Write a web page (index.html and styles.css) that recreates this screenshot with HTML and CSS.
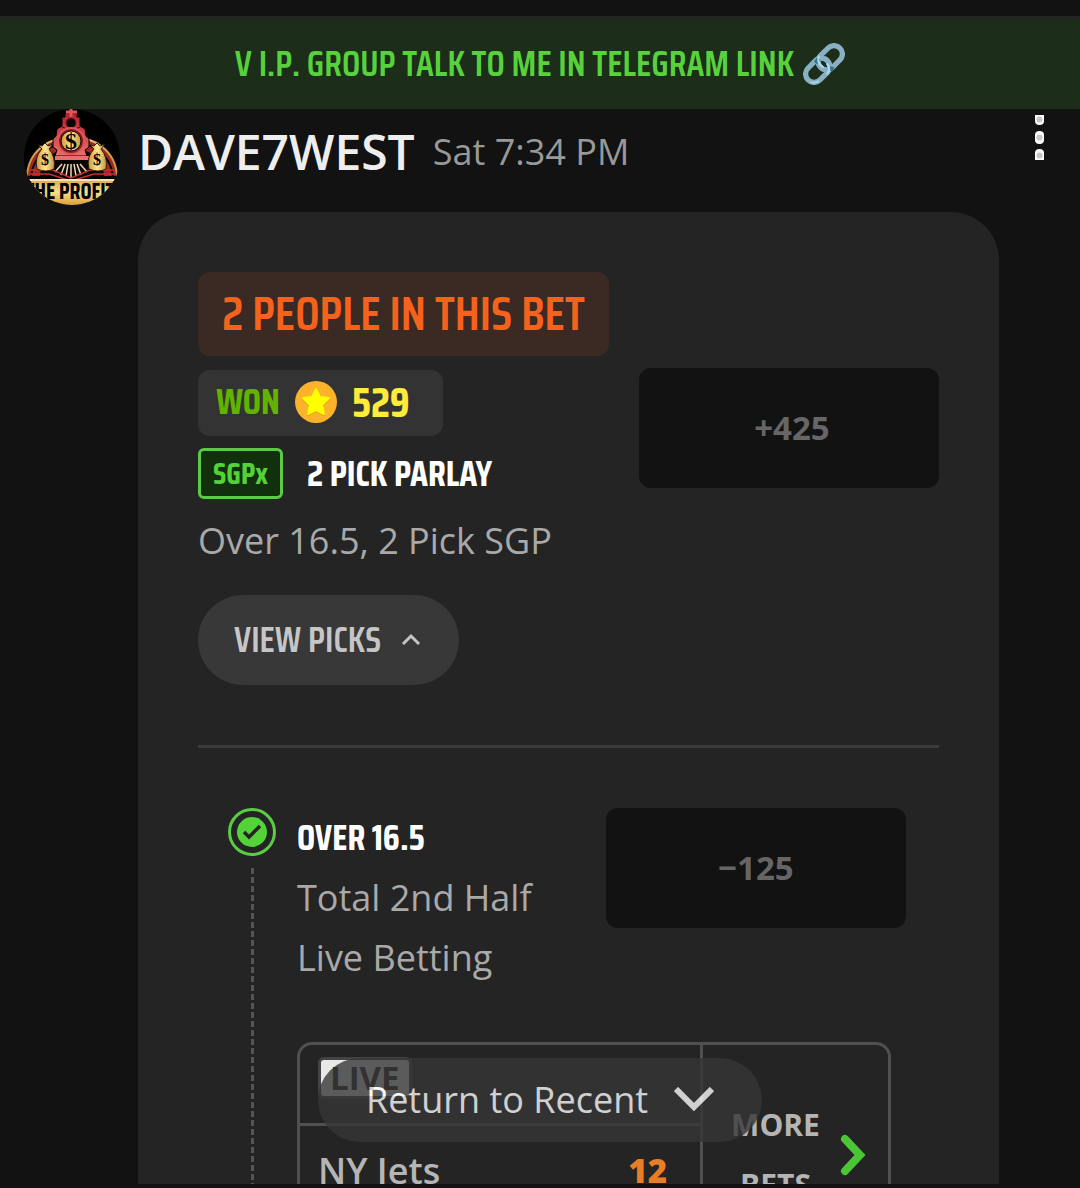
FILE: index.html
```html
<!DOCTYPE html>
<html lang="en">
<head>
<meta charset="utf-8">
<meta name="viewport" content="width=device-width, initial-scale=1">
<title>Group chat</title>
<link rel="stylesheet" href="styles.css">
</head>
<body>
<a class="banner" href="#telegram">
  <span>V I.P. GROUP TALK TO ME IN TELEGRAM LINK</span>
  <svg class="banner-icon" viewBox="0 0 40 40" aria-hidden="true">
    <g fill="none" stroke="#88afc2" stroke-width="5">
      <rect x="-13" y="-8" width="26" height="16" rx="8" transform="translate(26 14) rotate(-45)"/>
      <rect x="-13" y="-8" width="26" height="16" rx="8" transform="translate(14 26) rotate(-45)"/>
    </g>
    <path d="M12 19l3-4M25 24l4 1" fill="none" stroke="#2f7488" stroke-width="4"/>
    <path d="M15 13Q13 19 19 23M23 20Q27 25 23 29" fill="none" stroke="#a9dcec" stroke-width="2" stroke-linecap="round"/>
    <path d="M7 37q4 2 8-1" fill="none" stroke="#a3d3e5" stroke-width="2"/>
  </svg>
</a>

<main class="feed">
  <article class="message">
    <svg class="avatar" viewBox="0 0 96 96" role="img" aria-label="DAVE7WEST">
      <defs>
        <clipPath id="round"><circle cx="48" cy="48" r="48"/></clipPath>
        <linearGradient id="gold" x2="1"><stop offset="0" stop-color="#c8953c"/><stop offset=".5" stop-color="#fbe793"/><stop offset="1" stop-color="#c8953c"/></linearGradient>
        <linearGradient id="plate" x2="0" y2="1"><stop offset="0" stop-color="#d9a548"/><stop offset=".5" stop-color="#f8df8c"/><stop offset="1" stop-color="#d9a03a"/></linearGradient>
        <linearGradient id="red" x2="0" y2="1"><stop offset="0" stop-color="#b51f2a"/><stop offset="1" stop-color="#e8706c"/></linearGradient>
      </defs>
      <g clip-path="url(#round)">
        <path d="M0 0h96v96H0z" fill="#000"/>
        <path d="M3 67C6 15 90 15 93 67" fill="#a12626" stroke="url(#gold)" stroke-width="2"/>
        <path d="M7 67C12 22 84 22 89 67" fill="none" stroke="#000" stroke-width="2"/>
        <path d="M16 67C18 30 78 30 80 67z" fill="#0b0506"/>
        <path d="M41 4h12v4h3v9l5 3 1 7 3 3v8l-4 3 2 6H31l2-6-4-3v-8l3-3 1-7 5-3V8h3z" fill="url(#red)" stroke="#000" stroke-width="1"/>
        <path d="M42 3h11M47 0v8" stroke="#e0565a" stroke-width="3"/>
        <path d="M38 18q9 5 18 0" fill="none" stroke="#360c0f" stroke-width="1"/>
        <circle cx="47" cy="14" r="5" fill="#090506" stroke="#7d171b" stroke-width="1"/>
        <circle cx="47" cy="32" r="13" fill="#8c1c22" stroke="#e0565a" stroke-width="2"/>
        <circle cx="47" cy="32" r="10" fill="url(#gold)" stroke="#1b0a0a" stroke-width="1"/>
        <text x="47" y="40" text-anchor="middle" class="avatar-dollar">$</text>
        <path d="M31 47h34v4H31z" fill="#e8706c"/>
        <path d="M36 52h23v2H36z" fill="#000"/>
        <path d="M38 55l-7 8M41 55l-4 11M44 55l-2 12M47 55v13M50 55l2 12M53 55l4 11M56 55l7 8" stroke="#ead7b3" stroke-width="1.500"/>
        <path d="M5 61h24l18 8 19-8h24M5 65h20l22 7 23-7h21" fill="none" stroke="#c92f35" stroke-width="1.500"/>
        <g fill="url(#gold)" stroke="#30200e" stroke-width="1">
          <path d="M18 40l-4-4 4 1 3-3 3 3 5-2-4 5q7 8 5 20-8 4-17 0-3-12 5-20z"/>
          <path d="M70 40l-4-4 4 1 3-3 3 3 5-2-4 5q7 8 5 20-8 4-17 0-3-12 5-20z"/>
        </g>
        <text x="21" y="56" text-anchor="middle" class="avatar-coin">$</text>
        <text x="73" y="56" text-anchor="middle" class="avatar-coin">$</text>
        <path d="M0 70h96v26H0z" fill="url(#plate)"/>
        <path d="M0 70h96v2H0z" fill="#f8e4b3"/>
        <text x="46" y="90" text-anchor="middle" class="avatar-name">THE PROFIT</text>
      </g>
    </svg>

    <div class="body">
      <header class="byline">
        <h1 class="author">DAVE7WEST</h1>
        <time class="time">Sat 7:34 PM</time>
        <button class="menu" type="button" aria-label="Message options">
          <svg viewBox="0 0 10 46" aria-hidden="true">
            <path d="M0 0h9v6q0 4-4.500 4T0 6zM0 20q0-4 4.500-4T9 20v5q0 4-4.500 4T0 25zM0 38q0-4 4.500-4T9 38v7H0z" fill="#fff"/>
            <g fill="#c6c6c6"><circle cx="4.500" cy="4.500" r="3"/><circle cx="4.500" cy="22.500" r="3"/><circle cx="4.500" cy="40.500" r="3"/></g>
          </svg>
        </button>
      </header>

      <section class="card">
        <p class="people">2 PEOPLE IN THIS BET</p>
        <div class="summary">
          <div class="details">
            <div class="won">
              <span class="won-label">WON</span>
              <svg class="coin" viewBox="0 0 42 42" aria-hidden="true">
                <circle cx="21" cy="21" r="21" fill="#fdb22b"/>
                <path d="M21 9l4 8 9 1-7 7 2 9-8-4-8 4 2-9-7-7 9-1z" fill="#d9a514" stroke="#d9a514" stroke-width="2" stroke-linejoin="round"/>
                <path d="M21 8l4 8 9 1-7 7 2 9-8-4-8 4 2-9-7-7 9-1z" fill="#ff0" stroke="#ff0" stroke-width="2" stroke-linejoin="round"/>
              </svg>
              <span class="won-value">529</span>
            </div>
            <div class="parlay">
              <span class="tag">SGPx</span>
              <h2 class="title">2 PICK PARLAY</h2>
            </div>
            <p class="text">Over 16.5, 2 Pick SGP</p>
          </div>
          <button class="odds" type="button" disabled>+425</button>
        </div>
        <button class="toggle" type="button" aria-expanded="true">
          <span>VIEW PICKS</span>
          <svg class="toggle-icon" viewBox="0 0 20 14" aria-hidden="true"><path d="M2 11l8-8 8 8" fill="none" stroke="#c6c6c6" stroke-width="3"/></svg>
        </button>
        <hr class="rule">

        <div class="leg">
          <div class="track">
            <svg class="check" viewBox="0 0 48 48" role="img" aria-label="Won">
              <circle cx="24" cy="24" r="22.500" fill="none" stroke="#5bcb46" stroke-width="3"/>
              <circle cx="24" cy="24" r="15" fill="#53d337"/>
              <path d="M16 24l5 5 11-11" fill="none" stroke="#242424" stroke-width="3.500"/>
            </svg>
            <div class="dashes"></div>
          </div>
          <div class="pick">
            <div class="pick-head">
              <div>
                <h3 class="title">OVER 16.5</h3>
                <p class="text">Total 2nd Half</p>
                <p class="text">Live Betting</p>
              </div>
              <button class="odds" type="button" disabled>−125</button>
            </div>
            <div class="game">
              <div class="score">
                <div class="status"><span class="live">LIVE</span></div>
                <div class="team"><span>NY Jets</span><strong class="points">12</strong></div>
              </div>
              <a class="more" href="#bets">
                <span class="more-label">MORE BETS</span>
                <svg class="more-icon" viewBox="0 0 26 42" aria-hidden="true"><path d="M5 5l15 16L5 37" fill="none" stroke="#4bc435" stroke-width="8" stroke-linecap="round"/></svg>
              </a>
            </div>
          </div>
        </div>
      </section>
    </div>
  </article>
</main>

<button class="recent" type="button">
  <span>Return to Recent</span>
  <svg class="recent-icon" viewBox="0 0 40 26" aria-hidden="true"><path d="M2 2l18 18L38 2" fill="none" stroke="#fff" stroke-width="6"/></svg>
</button>
</body>
</html>
```
FILE: styles.css
```css
* { box-sizing: border-box; }

:root {
  --display: "Saira Condensed", "Roboto Condensed", sans-serif;
}

body {
  display: flex;
  flex-direction: column;
  height: 100vh;
  margin: 0;
  padding: 16px 0 4px;
  position: relative;
  background: #121212;
  color: #a9a9a9;
  font: 36px/60px "Open Sans", sans-serif;
  overflow: hidden;
}

h1, h2, h3, p { margin: 0; }
button { border: 0; padding: 0; font: inherit; }
svg { display: block; flex: none; }

.banner {
  display: flex;
  flex: none;
  align-items: center;
  justify-content: center;
  gap: 9px;
  height: 93px;
  border-top: 3px solid #242424;
  background: #1c2d19;
  color: #57d13c;
  font: 600 36px/60px var(--display);
  text-decoration: none;
}
.banner-icon { width: 42px; height: 42px; }

.feed { flex: 1; min-height: 0; overflow: hidden; }
.message { display: flex; gap: 18px; padding: 0 24px; }
.avatar { width: 96px; height: 96px; }
.avatar-dollar { font: bold 24px "Liberation Serif", serif; }
.avatar-coin { font: bold 16px "Liberation Serif", serif; }
.avatar-name { font: bold 22px var(--display); }

.body { flex: 1; min-width: 0; }
.byline { display: flex; align-items: center; gap: 18px; height: 103px; padding-bottom: 18px; }
.author { color: #eee; font-size: 48px; font-weight: 600; }
.time { color: #999; }
.menu { align-self: flex-start; margin: 6px 11px 0 auto; background: none; }
.menu svg { width: 10px; height: 46px; }

.card {
  margin-right: 57px;
  padding: 60px 60px 0;
  border-radius: 48px 48px 0 0;
  background: #242424;
}
.people {
  width: fit-content;
  margin-bottom: 12px;
  padding: 12px 24px;
  border-radius: 12px;
  background: #3a2a23;
  color: #f5621d;
  font: 600 48px/60px var(--display);
}
.summary, .pick-head { display: flex; justify-content: space-between; align-items: flex-start; }
.details { padding-top: 2px; }
.won {
  display: flex;
  align-items: center;
  gap: 15px;
  width: 245px;
  height: 66px;
  margin-bottom: 12px;
  padding: 0 18px 2px;
  border-radius: 12px;
  background: #333;
}
.won-label { color: #62b300; font: bold 36px/60px var(--display); }
.coin { width: 42px; height: 42px; }
.won-value { color: #ffeb3b; font: bold 42px/60px var(--display); }
.parlay { display: flex; align-items: center; gap: 24px; margin-bottom: 12px; }
.tag {
  width: 85px;
  border: 3px solid #5bcb46;
  border-radius: 6px;
  background: #12300d;
  color: #53d337;
  font: bold 30px/45px var(--display);
  text-align: center;
}
.title { color: #fff; font: bold 36px/51px var(--display); }
.odds {
  width: 300px;
  height: 120px;
  border-radius: 12px;
  background: #121212;
  color: #666;
  font-size: 33px;
  font-weight: bold;
}
.summary .odds { padding-left: 6px; }
.toggle {
  display: flex;
  align-items: center;
  gap: 20px;
  height: 90px;
  margin: 24px 0 60px;
  padding: 0 38px 0 36px;
  border-radius: 45px;
  background: #383838;
  color: #c6c6c6;
  font: 600 36px/60px var(--display);
}
.toggle-icon { width: 20px; height: 14px; }
.rule { height: 3px; margin: 0 0 60px; border: 0; background: #3a3a3a; }

.leg { display: flex; gap: 21px; padding: 0 33px 0 30px; }
.track { display: flex; flex-direction: column; align-items: center; gap: 12px; width: 48px; }
.check { width: 48px; height: 48px; }
.dashes { flex: 1; width: 3px; background: repeating-linear-gradient(#555 0 6px, transparent 6px 9px); }
.pick { flex: 1; }
.pick .title { line-height: 60px; }
.game {
  display: flex;
  min-height: 226px;
  margin: 54px 15px 0 0;
  border: 3px solid #505050;
  border-radius: 15px;
}
.score { flex: 1; border-right: 3px solid #505050; }
.status { height: 81px; padding: 12px 18px; border-bottom: 3px solid #505050; }
.live {
  display: block;
  width: fit-content;
  padding: 0 9px;
  border: 3px solid #444;
  border-radius: 6px;
  background: #e8e8e8;
  color: #242424;
  font-size: 33px;
  font-weight: bold;
  line-height: 36px;
}
.team { display: flex; justify-content: space-between; padding: 15px 33px 0 18px; font-weight: 600; color: #b5b5b5; }
.points { color: #e87d27; font-size: 33px; }
.more { display: flex; align-items: center; align-self: flex-start; gap: 20px; width: 185px; padding: 50px 22px 0 28px; color: #b5b5b5; text-decoration: none; }
.more-label { flex: 1; font-size: 30px; font-weight: bold; text-align: center; }
.more-icon { width: 26px; height: 42px; }

.recent {
  display: flex;
  position: absolute;
  bottom: 46px;
  left: 50%;
  align-items: center;
  gap: 26px;
  height: 84px;
  padding: 0 48px;
  border-radius: 42px;
  background: #363636;
  color: #fff;
  opacity: .79;
  transform: translateX(-50%);
  white-space: nowrap;
}
.recent-icon { width: 40px; height: 26px; }
```
